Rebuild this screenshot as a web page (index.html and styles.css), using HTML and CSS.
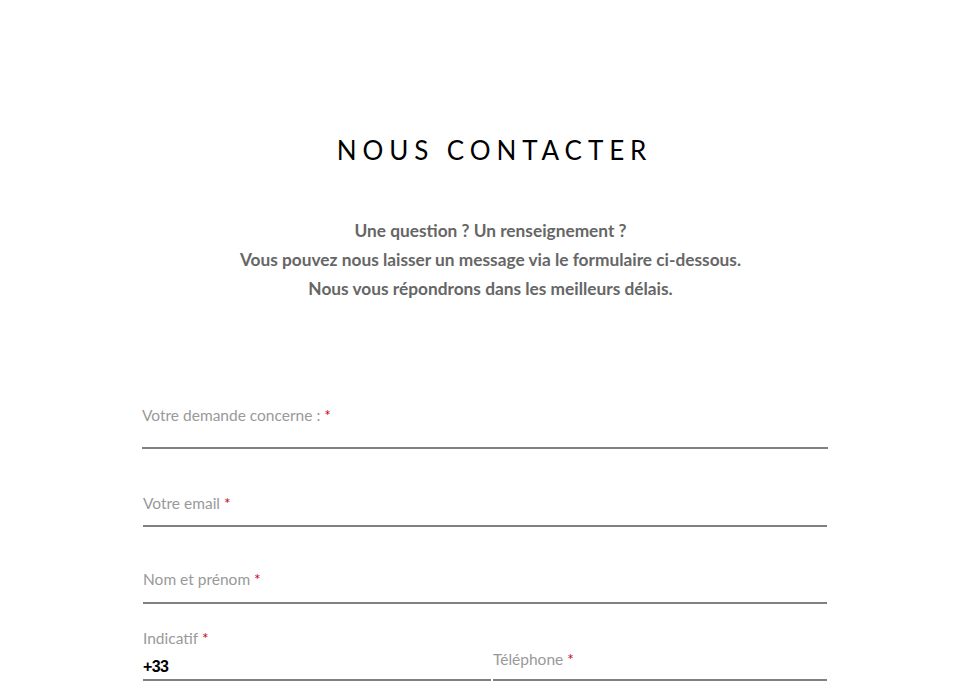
FILE: index.html
```html
<!DOCTYPE html>
<html lang="fr">
<head>
<meta charset="utf-8">
<title>Nous contacter</title>
<link rel="stylesheet" href="styles.css">
</head>
<body>
<main class="page">
  <h1 class="title">NOUS CONTACTER</h1>
  <div class="intro">
    <p>Une question ? Un renseignement ?</p>
    <p>Vous pouvez nous laisser un message via le formulaire ci-dessous.</p>
    <p>Nous vous répondrons dans les meilleurs délais.</p>
  </div>
  <form class="form">
    <div class="field field-select">
      <label class="label">Votre demande concerne : <span class="req">*</span></label>
      <div class="input"></div>
    </div>
    <div class="field field-email">
      <label class="label">Votre email <span class="req">*</span></label>
      <div class="input"></div>
    </div>
    <div class="field field-name">
      <label class="label">Nom et prénom <span class="req">*</span></label>
      <div class="input"></div>
    </div>
    <div class="row">
      <div class="field field-code">
        <label class="label">Indicatif <span class="req">*</span></label>
        <div class="input value">+33</div>
      </div>
      <div class="field field-phone">
        <label class="label">Téléphone <span class="req">*</span></label>
        <div class="input"></div>
      </div>
    </div>
  </form>
</main>
</body>
</html>
```
FILE: styles.css
```css
html, body {
  margin: 0;
  padding: 0;
  background: #fff;
}
body {
  font-family: Lato, "Noto Sans", sans-serif;
  color: #000;
}
.page {
  width: 687px;
  margin: 0 auto;
  padding-top: 134px;
}
.title {
  margin: 0;
  text-align: center;
  font-family: Lato, sans-serif;
  font-weight: 400;
  font-size: 26px;
  line-height: 32px;
  letter-spacing: 5.9px;
  padding-left: 18px;
}
.intro {
  margin-top: 50px;
  text-align: center;
  color: #666;
  font-size: 17.3px;
  font-weight: 700;
  padding-left: 10px;
}
.intro p {
  margin: 0;
  line-height: 29px;
}
.form {
  margin-top: 102px;
  display: flex;
  flex-direction: column;
}
.field {
  display: flex;
  flex-direction: column;
}
.field-select { margin-right: 1px; }
.label {
  font-size: 15.5px;
  line-height: 20px;
  color: #999;
}
.req {
  color: #d0021b;
}
.input {
  border-bottom: 2px solid #808080;
}
.field-select .input { height: 22px; }
.field-email { margin-top: 44px; margin-left: 1px; margin-right: 2px; }
.field-email .input { height: 12px; }
.field-name { margin-top: 42px; margin-left: 1px; margin-right: 2px; }
.field-name .input { height: 13px; }
.row {
  margin-top: 24px;
  margin-left: 1px;
  margin-right: 2px;
  display: flex;
  align-items: flex-end;
  gap: 2px;
}
.field-code { width: 348px; }
.field-phone { flex: 1; }
.field-phone .input { height: 10px; }
.value {
  font-family: "Liberation Sans", Arial, sans-serif;
  font-weight: 700;
  font-size: 16px;
  line-height: 20px;
  padding-top: 9px;
  padding-bottom: 2px;
  letter-spacing: -0.6px;
  color: #000;
}
```
